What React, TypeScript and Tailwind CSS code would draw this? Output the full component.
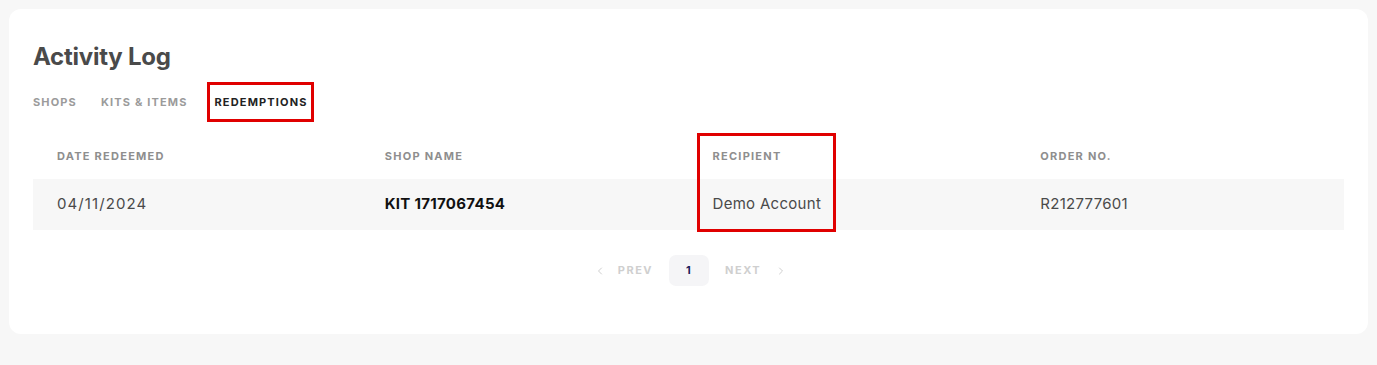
import { ChevronLeft, ChevronRight } from "lucide-react"

const rows = [
  { date: "04/11/2024", shop: "KIT 1717067454", recipient: "Demo Account", order: "R212777601" },
]

const font = { fontFamily: "Inter, 'Noto Sans', sans-serif" }

export default function App() {
  return (
    <div className="min-h-[365px] bg-[#f7f7f7] p-[9px]" style={font}>
      <div className="h-[325px] rounded-[12px] bg-white px-[24px] pt-[33px]">
        <h1 className="text-[24px] leading-[30px] font-bold tracking-[-0.25px] text-[#4a4a4a]">Activity Log</h1>

        {/* tabs */}
        <div className="mt-[10px] flex items-center gap-[24px] text-[11px] font-bold tracking-[1.15px] text-[#9b9b9b]">
          <span>SHOPS</span>
          <span>KITS &amp; ITEMS</span>
          <span className="-ml-[5px] flex h-[40px] items-center border-[3px] border-[#e00000] pr-[3px] pl-[5px] text-[#222]">
            REDEMPTIONS
          </span>
        </div>

        {/* table */}
        <div className="relative mt-[11px]">
          <div className="grid h-[46px] grid-cols-4 items-center text-[11px] font-bold tracking-[1.25px] text-[#8e8e8e]">
            <div className="pl-[24px]">DATE REDEEMED</div>
            <div className="pl-[24px]">SHOP NAME</div>
            <div className="pl-[24px]">RECIPIENT</div>
            <div className="pl-[24px]">ORDER NO.</div>
          </div>
          {rows.map((r) => (
            <div key={r.order} className="grid h-[51px] grid-cols-4 items-center bg-[#f7f7f7] text-[15px] tracking-[0.3px] text-[#4a4a4a]">
              <div className="pl-[24px] tracking-[1.1px]">{r.date}</div>
              <div className="pl-[24px] font-bold text-[#111]">{r.shop}</div>
              <div className="pl-[24px]">{r.recipient}</div>
              <div className="pl-[24px]">{r.order}</div>
            </div>
          ))}
          {/* highlight box */}
          <div className="pointer-events-none absolute top-0 left-[664px] h-[99px] w-[139px] border-[3px] border-[#e00000]"></div>
        </div>

        {/* pagination */}
        <div className="mt-[25px] flex items-center justify-center pl-[4px] text-[11px] font-bold tracking-[1.5px] text-[#cfcfcf]">
          <span className="flex items-center gap-[12px]">
            <ChevronLeft className="h-[12px] w-[12px]" strokeWidth={2} />
            PREV
          </span>
          <span className="mx-[16px] flex h-[31px] w-[40px] items-center justify-center rounded-[7px] bg-[#f5f5f7] text-[#1c1c5c]">
            1
          </span>
          <span className="flex items-center gap-[14px]">
            NEXT
            <ChevronRight className="h-[12px] w-[12px]" strokeWidth={2} />
          </span>
        </div>
      </div>
    </div>
  )
}
